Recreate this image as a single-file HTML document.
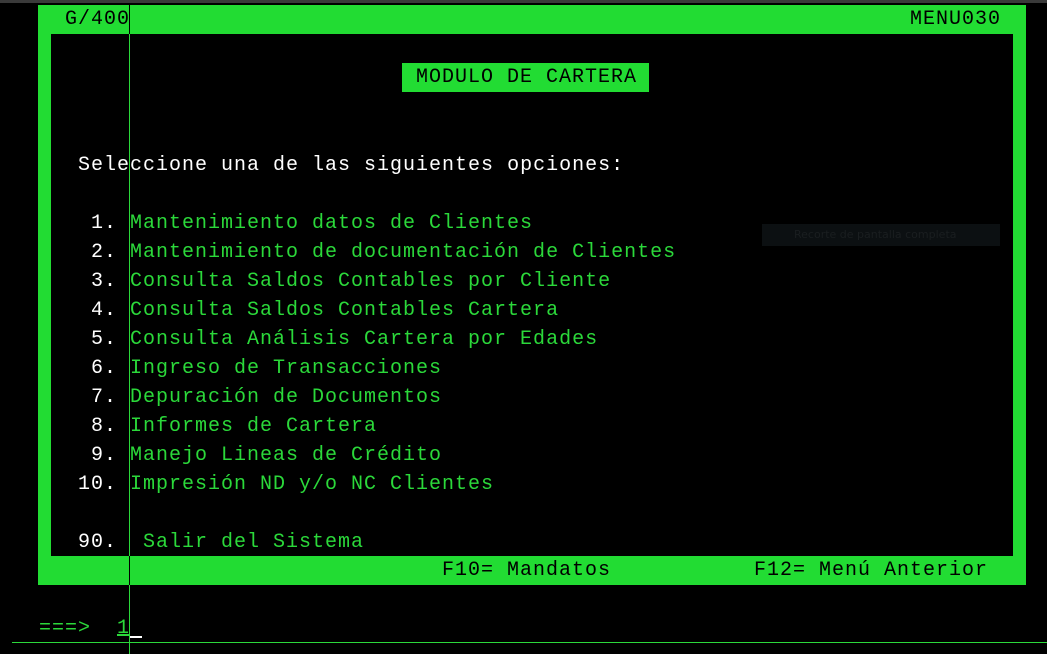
<!DOCTYPE html>
<html><head><meta charset="utf-8"><style>
body{margin:0;width:1047px;height:654px;background:#000;position:relative;overflow:hidden;font-family:"Liberation Mono",monospace;font-size:20px;letter-spacing:1px}
.a{position:absolute;white-space:pre;line-height:20px;height:20px}
.w{color:#fff}.g{color:#2bd83a}.k{color:#000}
</style></head><body>
<div style="position:absolute;left:0;top:0;width:1047px;height:3px;background:#3a3a3a"></div>
<div style="position:absolute;left:38px;top:5px;width:988px;height:580px;background:#22dc33"></div>
<div style="position:absolute;left:51px;top:34px;width:962px;height:522px;background:#000"></div>
<div style="position:absolute;left:402px;top:63px;width:247px;height:29px;background:#22dc33"></div>
<div style="position:absolute;left:762px;top:224px;width:238px;height:22px;background:#0c1012;color:#1a1e20;font-family:'DejaVu Sans',sans-serif;font-size:11px;letter-spacing:0;line-height:22px;text-indent:32px">Recorte de pantalla completa</div>
<div class="a k" style="left:65px;top:10px">G/400</div>
<div class="a k" style="left:910px;top:10px">MENU030</div>
<div class="a k" style="left:416px;top:68px">MODULO DE CARTERA</div>
<div class="a w" style="left:78px;top:156px">Seleccione una de las siguientes opciones:</div>
<div class="a w" style="left:91px;top:214px">1.</div><div class="a g" style="left:130px;top:214px">Mantenimiento datos de Clientes</div>
<div class="a w" style="left:91px;top:243px">2.</div><div class="a g" style="left:130px;top:243px">Mantenimiento de documentación de Clientes</div>
<div class="a w" style="left:91px;top:272px">3.</div><div class="a g" style="left:130px;top:272px">Consulta Saldos Contables por Cliente</div>
<div class="a w" style="left:91px;top:301px">4.</div><div class="a g" style="left:130px;top:301px">Consulta Saldos Contables Cartera</div>
<div class="a w" style="left:91px;top:330px">5.</div><div class="a g" style="left:130px;top:330px">Consulta Análisis Cartera por Edades</div>
<div class="a w" style="left:91px;top:359px">6.</div><div class="a g" style="left:130px;top:359px">Ingreso de Transacciones</div>
<div class="a w" style="left:91px;top:388px">7.</div><div class="a g" style="left:130px;top:388px">Depuración de Documentos</div>
<div class="a w" style="left:91px;top:417px">8.</div><div class="a g" style="left:130px;top:417px">Informes de Cartera</div>
<div class="a w" style="left:91px;top:446px">9.</div><div class="a g" style="left:130px;top:446px">Manejo Lineas de Crédito</div>
<div class="a w" style="left:78px;top:475px">10.</div><div class="a g" style="left:130px;top:475px">Impresión ND y/o NC Clientes</div>
<div class="a w" style="left:78px;top:533px">90.</div><div class="a g" style="left:143px;top:533px">Salir del Sistema</div>
<div class="a k" style="left:442px;top:561px">F10= Mandatos</div>
<div class="a k" style="left:754px;top:561px">F12= Menú Anterior</div>
<div class="a g" style="left:39px;top:619px">===&gt;</div>
<div class="a g" style="left:117px;top:619px;text-decoration:underline">1</div>
<div style="position:absolute;left:130px;top:636px;width:12px;height:2px;background:#fff"></div>
<div style="position:absolute;left:12px;top:642px;width:1035px;height:1px;background:#2bd83a"></div>
<div style="position:absolute;left:129px;top:5px;width:1px;height:649px;background:#2bd83a"></div>
<div style="position:absolute;left:129px;top:5px;width:1px;height:29px;background:#000"></div>
<div style="position:absolute;left:129px;top:556px;width:1px;height:29px;background:#000"></div>
</body></html>
